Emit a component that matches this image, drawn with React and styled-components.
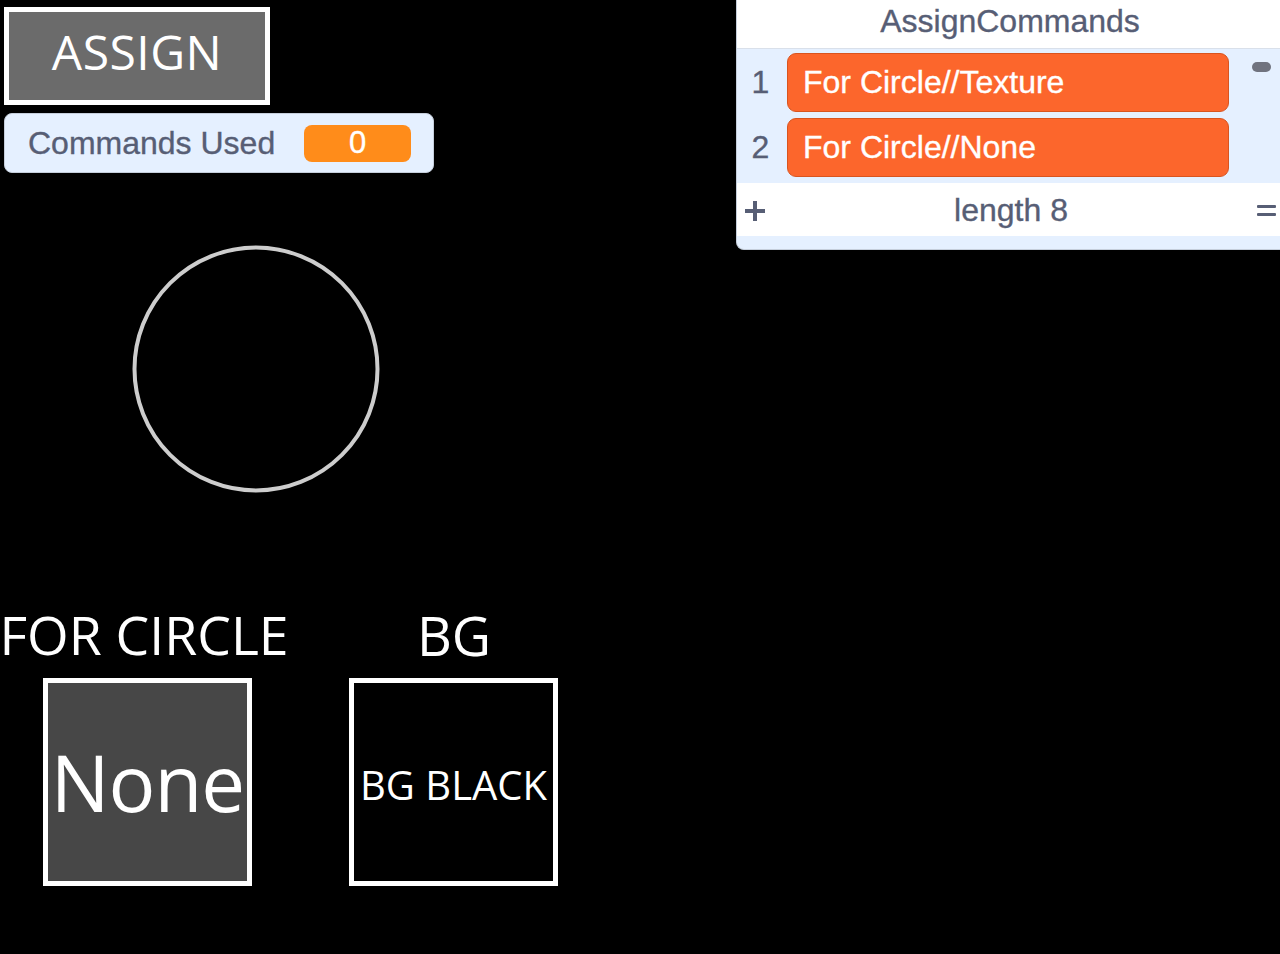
import React from "react";
import styled, { createGlobalStyle } from "styled-components";

const Global = createGlobalStyle`
  html, body { margin: 0; padding: 0; background: #000; }
  #root { width: 1280px; height: 954px; }
`;

const Stage = styled.div`
  position: relative;
  width: 1280px;
  height: 954px;
  background: #000;
  overflow: hidden;
  font-family: "Open Sans", "Noto Sans", sans-serif;
`;

/* ---- sprites on the stage canvas ---- */
const Sprite = styled.div`
  position: absolute;
  left: ${(p) => p.$x}px;
  top: ${(p) => p.$y}px;
`;

const AssignButton = styled.div`
  box-sizing: border-box;
  width: 266px;
  height: 98px;
  border: 5px solid #fff;
  background: #6b6b6b;
  color: #fff;
  display: flex;
  align-items: center;
  justify-content: center;
  padding-bottom: 8px;
  font-size: 48px;
  line-height: 1;
  letter-spacing: 0.5px;
`;

const Caption = styled.div`
  width: ${(p) => p.$w}px;
  display: flex;
  justify-content: center;
  color: #fff;
  font-size: ${(p) => p.$size || 54}px;
  line-height: 1;
  white-space: nowrap;
`;

const Tile = styled.div`
  box-sizing: border-box;
  width: 209px;
  height: 208px;
  border: 5px solid #fff;
  background: ${(p) => p.$bg};
  color: #fff;
  display: flex;
  align-items: center;
  justify-content: center;
  padding-top: ${(p) => p.$pt || 0}px;
  font-size: ${(p) => p.$size}px;
  letter-spacing: ${(p) => p.$ls || 0}px;
  line-height: 1;
  white-space: nowrap;
`;

/* ---- monitors ---- */
const Monitor = styled.div`
  position: absolute;
  left: ${(p) => p.$x}px;
  top: ${(p) => p.$y}px;
  font-family: "Liberation Sans", Arial, Helvetica, sans-serif;
  color: #575e75;
  -webkit-text-stroke: 0.35px currentColor;
`;

const VarMonitor = styled.div`
  box-sizing: border-box;
  width: 430px;
  height: 60px;
  background: #e5f0ff;
  border: 1px solid #c5cedb;
  border-radius: 8px;
  display: flex;
  align-items: center;
  padding: 0 0 0 23px;
  gap: 29px;
`;

const VarLabel = styled.span`
  font-size: 32px;
  color: #575e75;
  white-space: nowrap;
`;

const VarValue = styled.span`
  box-sizing: border-box;
  width: 107px;
  height: 37px;
  border-radius: 8px;
  background: #ff8c1a;
  color: #fff;
  font-size: 31px;
  display: flex;
  align-items: center;
  justify-content: center;
`;

const ListBox = styled.div`
  box-sizing: border-box;
  width: 560px;
  height: 250px;
  background: #e5f0ff;
  border: 1px solid #c5cedb;
  border-top: none;
  border-radius: 0 0 8px 8px;
  display: flex;
  flex-direction: column;
  overflow: hidden;
`;

const ListHeader = styled.div`
  height: 49px;
  flex: none;
  background: #fff;
  border-bottom: 1px solid #d9e0ea;
  box-sizing: border-box;
  display: flex;
  align-items: center;
  justify-content: center;
  padding-right: 12px;
  padding-bottom: 5px;
  font-size: 32px;
  color: #575e75;
`;

const ListBody = styled.div`
  position: relative;
  height: 134px;
  flex: none;
  overflow: hidden;
  padding-top: 4px;
  box-sizing: border-box;
  display: flex;
  flex-direction: column;
  gap: 7px;
`;

const Row = styled.div`
  display: flex;
  align-items: center;
  height: 58px;
  flex: none;
`;

const RowIndex = styled.span`
  width: 47px;
  flex: none;
  text-align: center;
  font-size: 32px;
  color: #575e75;
  padding-right: 3px;
`;

const RowItem = styled.div`
  box-sizing: border-box;
  width: 442px;
  height: 59px;
  background: #fc662c;
  border: 1px solid #d9541f;
  border-radius: 9px;
  color: #fff;
  font-size: 32px;
  display: flex;
  align-items: center;
  padding-left: 15px;
  padding-top: 1px;
  white-space: nowrap;
`;

const Thumb = styled.div`
  position: absolute;
  left: 515px;
  top: 13px;
  width: 19px;
  height: 10px;
  border-radius: 5px;
  background: #70737f;
`;

const ListFooter = styled.div`
  height: 53px;
  flex: none;
  background: #fff;
  display: flex;
  align-items: center;
  padding: 2px 19px 0 8px;
  box-sizing: border-box;
  font-size: 32px;
  color: #575e75;
`;

const Plus = styled.span`
  width: 20px;
  height: 20px;
  flex: none;
  position: relative;
  &::before, &::after {
    content: "";
    position: absolute;
    background: #575e75;
  }
  &::before { left: 0; right: 0; top: 8px; height: 4px; }
  &::after { top: 0; bottom: 0; left: 8px; width: 4px; }
`;

const FooterLength = styled.span`
  flex: 1;
  text-align: center;
  white-space: nowrap;
`;

const Equals = styled.span`
  width: 19px;
  flex: none;
  display: flex;
  flex-direction: column;
  gap: 5px;
  &::before, &::after {
    content: "";
    display: block;
    height: 3px;
    background: #575e75;
    border-radius: 1px;
  }
`;

const items = ["For Circle//Texture", "For Circle//None"];

export default function App() {
  return (
    <>
      <Global />
      <Stage>
        <Sprite $x={4} $y={7}>
          <AssignButton>ASSIGN</AssignButton>
        </Sprite>

        <Monitor $x={4} $y={113}>
          <VarMonitor>
            <VarLabel>Commands Used</VarLabel>
            <VarValue>0</VarValue>
          </VarMonitor>
        </Monitor>

        <Sprite $x={131} $y={244}>
          <svg width="250" height="250" viewBox="0 0 250 250">
            <circle cx="125" cy="125" r="121.5" fill="none" stroke="#cdcdcd" strokeWidth="4" />
          </svg>
        </Sprite>

        <Sprite $x={0} $y={608}>
          <Caption $w={288} $size={53.5}>FOR CIRCLE</Caption>
        </Sprite>
        <Sprite $x={354} $y={608}>
          <Caption $w={200}>BG</Caption>
        </Sprite>

        <Sprite $x={43} $y={678}>
          <Tile $bg="#474747" $size={78} $ls={-1}>None</Tile>
        </Sprite>
        <Sprite $x={349} $y={678}>
          <Tile $bg="#000" $size={40} $pt={6}>BG BLACK</Tile>
        </Sprite>

        <Monitor $x={736} $y={0}>
          <ListBox>
            <ListHeader>AssignCommands</ListHeader>
            <ListBody>
              {items.map((t, i) => (
                <Row key={t}>
                  <RowIndex>{i + 1}</RowIndex>
                  <RowItem>{t}</RowItem>
                </Row>
              ))}
              <Row>
                <RowIndex />
                <RowItem />
              </Row>
              <Thumb />
            </ListBody>
            <ListFooter>
              <Plus />
              <FooterLength>length 8</FooterLength>
              <Equals />
            </ListFooter>
          </ListBox>
        </Monitor>
      </Stage>
    </>
  );
}
